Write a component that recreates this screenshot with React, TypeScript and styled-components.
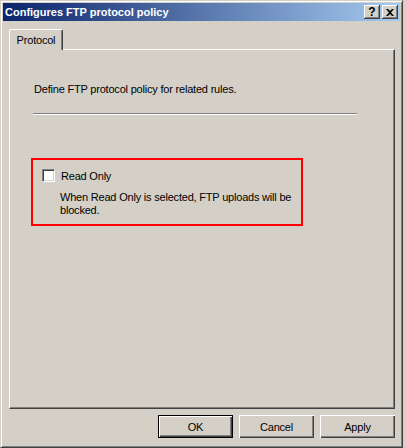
import React from "react";
import styled, { createGlobalStyle } from "styled-components";

const Global = createGlobalStyle`
  html, body { margin: 0; padding: 0; background: #d4d0c8; }
  body { width: 405px; height: 448px; overflow: hidden; font-family: "Liberation Sans", Arial, sans-serif; letter-spacing: -0.2px; }
  * { box-sizing: border-box; }
`;

const Win = styled.div`
  width: 403px;
  height: 448px;
  background: #d4d0c8;
  border-top: 1px solid #d4d0c8;
  border-left: 1px solid #d4d0c8;
  border-right: 1px solid #404040;
  border-bottom: 1px solid #404040;
  box-shadow: inset 1px 1px 0 #ffffff, inset -1px -1px 0 #808080;
  padding: 2px;
  display: flex;
  flex-direction: column;
`;

const TitleBar = styled.div`
  height: 18px;
  background: linear-gradient(to right, #0a246a, #a6caf0);
  display: flex;
  align-items: center;
  padding: 0 2px 0 2px;
`;

const Title = styled.div`
  flex: 1;
  color: #ffffff;
  font-weight: bold;
  font-size: 11px;
  font-family: "Liberation Sans", Arial, sans-serif;
  letter-spacing: 0;
  white-space: nowrap;
`;

const CapBtn = styled.div<{ $gap?: number }>`
  width: 16px;
  height: 14px;
  background: #d4d0c8;
  box-shadow: inset -1px -1px 0 #404040, inset 1px 1px 0 #ffffff, inset -2px -2px 0 #808080;
  display: flex;
  align-items: center;
  justify-content: center;
  margin-left: ${(p) => p.$gap ?? 0}px;
  font-size: 12px;
  font-weight: bold;
  color: #000;
  font-family: "Liberation Sans", Arial, sans-serif;
  line-height: 1;
  letter-spacing: 0;
`;

const Body = styled.div`
  flex: 1;
  display: flex;
  flex-direction: column;
  padding: 8px 5px 7px 6px;
`;

const TabRow = styled.div`
  display: flex;
  height: 20px;
  align-items: flex-end;
`;

const Tab = styled.div`
  width: 54px;
  height: 21px;
  margin-bottom: -1px;
  background: #d4d0c8;
  border-top: 1px solid #ffffff;
  border-left: 1px solid #ffffff;
  border-right: 1px solid #404040;
  border-top-left-radius: 2px;
  border-top-right-radius: 2px;
  box-shadow: inset -1px 0 0 #808080;
  font-size: 11px;
  color: #000;
  display: flex;
  justify-content: center;
  padding-top: 4px;
  position: relative;
  z-index: 1;
`;

const Panel = styled.div`
  width: 386px;
  height: 360px;
  border-top: 1px solid #ffffff;
  border-left: 1px solid #ffffff;
  border-right: 1px solid #404040;
  border-bottom: 1px solid #404040;
  box-shadow: inset -1px -1px 0 #808080;
  display: flex;
  flex-direction: column;
  padding: 33px 0 0 21px;
`;

const Intro = styled.div`
  font-size: 11px;
  line-height: 13px;
  color: #000;
  margin-left: 3px;
`;

const Separator = styled.div`
  width: 324px;
  height: 2px;
  margin: 17px 0 0 2px;
  border-top: 1px solid #808080;
  border-bottom: 1px solid #ffffff;
`;

const Highlight = styled.div`
  width: 272px;
  height: 68px;
  margin-top: 43px;
  border: 2px solid #ff0000;
  padding: 9px 0 0 9px;
  display: flex;
  flex-direction: column;
`;

const CheckRow = styled.label`
  display: flex;
  align-items: center;
  gap: 6px;
  font-size: 11px;
  color: #000;
  height: 13px;
`;

const CheckBox = styled.span`
  width: 13px;
  height: 13px;
  background: #ffffff;
  border-top: 1px solid #808080;
  border-left: 1px solid #808080;
  border-right: 1px solid #ffffff;
  border-bottom: 1px solid #ffffff;
  box-shadow: inset 1px 1px 0 #404040, inset -1px -1px 0 #d4d0c8;
  flex: none;
`;

const Desc = styled.div`
  margin: 9px 0 0 18px;
  font-size: 11px;
  line-height: 13px;
  color: #000;
  width: 240px;
`;

const ButtonRow = styled.div`
  display: flex;
  justify-content: flex-end;
  gap: 6px;
  margin-top: 6px;
`;

const Btn = styled.button<{ $default?: boolean }>`
  width: 75px;
  height: 23px;
  background: #d4d0c8;
  font-family: "Liberation Sans", Arial, sans-serif;
  font-size: 11px;
  letter-spacing: -0.2px;
  color: #000;
  padding: 0;
  border: ${(p) => (p.$default ? "1px solid #000000" : "none")};
  box-shadow: inset 1px 1px 0 #ffffff, inset -1px -1px 0 #404040, inset -2px -2px 0 #808080;
`;

export default function App() {
  return (
    <>
      <Global />
      <Win>
        <TitleBar>
          <Title>Configures FTP protocol policy</Title>
          <CapBtn>?</CapBtn>
          <CapBtn $gap={2}>
            <svg width="8" height="7" viewBox="0 0 8 7">
              <path d="M0 0h2l2 2 2-2h2L5 3.5 8 7H6L4 5 2 7H0l3-3.5z" fill="#000" />
            </svg>
          </CapBtn>
        </TitleBar>
        <Body>
          <TabRow>
            <Tab>Protocol</Tab>
          </TabRow>
          <Panel>
            <Intro>Define FTP protocol policy for related rules.</Intro>
            <Separator />
            <Highlight>
              <CheckRow>
                <CheckBox />
                Read Only
              </CheckRow>
              <Desc>When Read Only is selected, FTP uploads will be blocked.</Desc>
            </Highlight>
          </Panel>
          <ButtonRow>
            <Btn $default>OK</Btn>
            <Btn>Cancel</Btn>
            <Btn>Apply</Btn>
          </ButtonRow>
        </Body>
      </Win>
    </>
  );
}
